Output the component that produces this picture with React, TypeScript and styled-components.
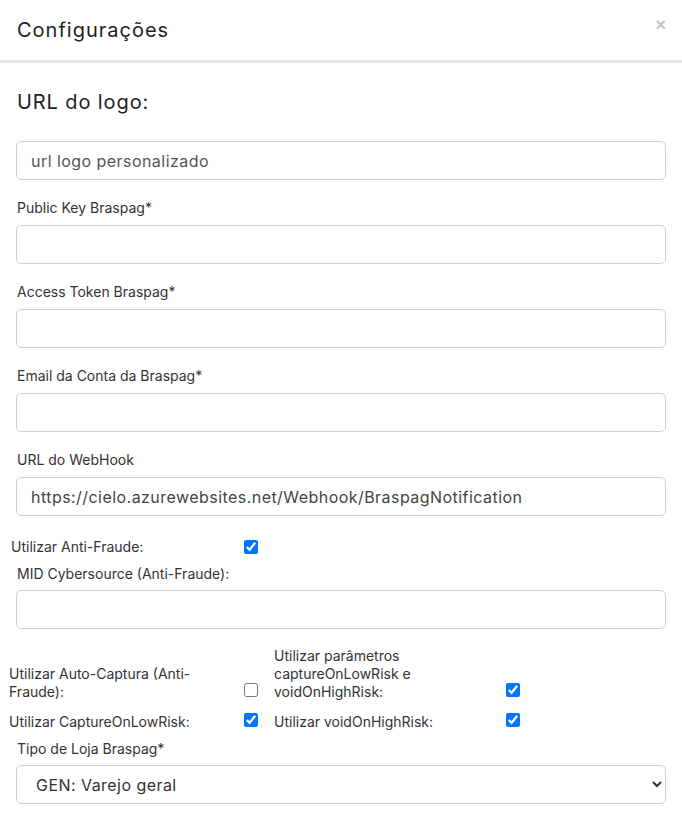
import React, { useState } from 'react';
import styled, { createGlobalStyle } from 'styled-components';

const GlobalStyle = createGlobalStyle`
  html, body {
    margin: 0;
    padding: 0;
    background: #fff;
  }
  body {
    font-family: Inter, "Open Sans", sans-serif;
    color: #333;
  }
  * {
    box-sizing: border-box;
  }
`;

const Modal = styled.div`
  width: 682px;
  background: #fff;
`;

const Header = styled.div`
  height: 63px;
  display: flex;
  align-items: center;
  justify-content: space-between;
  padding: 0 16px 0 17px;
  border-bottom: 3px solid #e5e5e5;
`;

const Title = styled.h4`
  margin: 0;
  font-size: 20px;
  font-weight: 400;
  letter-spacing: 1px;
  color: #222;
`;

const Close = styled.button`
  border: none;
  background: none;
  padding: 0;
  margin-top: -10px;
  font-size: 18px;
  font-weight: 700;
  color: #c4c4c4;
  cursor: pointer;
  line-height: 1;
`;

const Body = styled.div`
  padding: 27px 16px 14px 16px;
`;

const Section = styled.h3`
  margin: 0 0 27px 1px;
  font-size: 20px;
  font-weight: 400;
  line-height: 24px;
  letter-spacing: 0.9px;
  color: #222;
`;

const FormGroup = styled.div<{ $tight?: boolean }>`
  margin-bottom: ${(p) => (p.$tight ? '10px' : '18px')};
`;

const Label = styled.label<{ $gap?: number }>`
  display: block;
  font-size: 14px;
  line-height: 20px;
  margin: 0 0 ${(p) => p.$gap ?? 7}px 1px;
  color: #333;
`;

const Input = styled.input`
  width: 100%;
  height: 39px;
  padding: 0 14px;
  border: 1px solid #cfcfcf;
  border-radius: 5px;
  font-family: inherit;
  font-size: 16px;
  letter-spacing: 0.45px;
  color: #444;
  background: #fff;
  outline: none;

  &::placeholder {
    color: #555;
  }
`;

const Select = styled.select`
  width: 100%;
  height: 39px;
  padding: 0 8px 0 15px;
  border: 1px solid #cfcfcf;
  border-radius: 5px;
  font-family: inherit;
  font-size: 16px;
  letter-spacing: 0.45px;
  color: #333;
  background: #fff;
  outline: none;
`;

const CheckRow = styled.div<{ $gap?: number }>`
  display: grid;
  grid-template-columns: 235px 30px 232px 30px;
  align-items: end;
  margin-left: -7px;
  margin-bottom: ${(p) => p.$gap ?? 10}px;
`;

const CheckLabel = styled.span<{ $width?: number }>`
  display: block;
  max-width: ${(p) => p.$width ?? 200}px;
  font-size: 14px;
  line-height: 18px;
  color: #333;
`;

const Check = styled.input.attrs({ type: 'checkbox' })`
  width: 14px;
  height: 14px;
  margin: 0 0 4px 0;
  accent-color: #0075ff;
`;

const SingleCheck = styled.div`
  display: grid;
  grid-template-columns: 233px 30px;
  align-items: center;
  margin: 22px 0 8px -5px;

  ${Check} {
    margin: 0;
  }
`;

export default function App() {
  const [antiFraude, setAntiFraude] = useState(true);
  const [autoCaptura, setAutoCaptura] = useState(false);
  const [params, setParams] = useState(true);
  const [lowRisk, setLowRisk] = useState(true);
  const [highRisk, setHighRisk] = useState(true);

  return (
    <Modal>
      <GlobalStyle />
      <Header>
        <Title>Configurações</Title>
        <Close aria-label="Fechar">×</Close>
      </Header>
      <Body>
        <Section>URL do logo:</Section>
        <FormGroup>
          <Input placeholder="url logo personalizado" />
        </FormGroup>
        <FormGroup>
          <Label>Public Key Braspag*</Label>
          <Input />
        </FormGroup>
        <FormGroup>
          <Label>Access Token Braspag*</Label>
          <Input />
        </FormGroup>
        <FormGroup>
          <Label>Email da Conta da Braspag*</Label>
          <Input />
        </FormGroup>
        <FormGroup $tight>
          <Label>URL do WebHook</Label>
          <Input defaultValue="https://cielo.azurewebsites.net/Webhook/BraspagNotification" />
        </FormGroup>

        <SingleCheck>
          <CheckLabel>Utilizar Anti-Fraude:</CheckLabel>
          <Check checked={antiFraude} onChange={() => setAntiFraude(!antiFraude)} />
        </SingleCheck>

        <FormGroup>
          <Label $gap={6}>MID Cybersource (Anti-Fraude):</Label>
          <Input />
        </FormGroup>

        <CheckRow $gap={12}>
          <CheckLabel $width={190}>Utilizar Auto-Captura (Anti-Fraude):</CheckLabel>
          <Check checked={autoCaptura} onChange={() => setAutoCaptura(!autoCaptura)} />
          <CheckLabel $width={180}>Utilizar parâmetros captureOnLowRisk e voidOnHighRisk:</CheckLabel>
          <Check checked={params} onChange={() => setParams(!params)} />
        </CheckRow>
        <CheckRow $gap={8}>
          <CheckLabel>Utilizar CaptureOnLowRisk:</CheckLabel>
          <Check checked={lowRisk} onChange={() => setLowRisk(!lowRisk)} />
          <CheckLabel>Utilizar voidOnHighRisk:</CheckLabel>
          <Check checked={highRisk} onChange={() => setHighRisk(!highRisk)} />
        </CheckRow>

        <FormGroup>
          <Label $gap={6}>Tipo de Loja Braspag*</Label>
          <Select defaultValue="GEN">
            <option value="GEN">GEN: Varejo geral</option>
          </Select>
        </FormGroup>
      </Body>
    </Modal>
  );
}
